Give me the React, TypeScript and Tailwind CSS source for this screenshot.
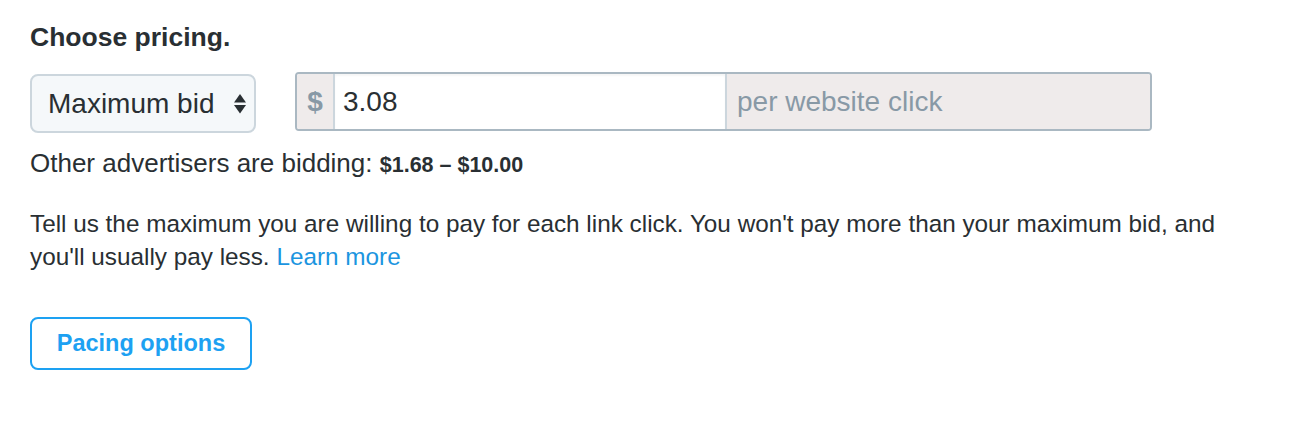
export default function App() {
  return (
    <div className="min-h-screen bg-white px-[30px] pt-[21px] font-['Liberation_Sans',Arial,sans-serif] text-[#292f33]">
      <h2 className="text-[26.5px] font-bold leading-[32px]">Choose pricing.</h2>

      <div className="mt-[19px] flex items-start gap-[39px]">
        {/* select */}
        <div className="mt-[2px] flex h-[59px] w-[226px] items-center justify-between rounded-[8px] border-2 border-[#ccd6dd] bg-[#f5f8fa] pl-[16px] pr-[8px]">
          <span className="text-[28px] leading-none">Maximum bid</span>
          <svg width="12" height="20" viewBox="0 0 12 20" className="mt-[1px]">
            <path d="M6 0 L12 8.5 L0 8.5 Z" fill="#292f33" />
            <path d="M0 11 L12 11 L6 19.5 Z" fill="#292f33" />
          </svg>
        </div>

        {/* input group */}
        <div className="flex h-[59px] w-[857px] overflow-hidden rounded-[4px] border-2 border-[#aab8c2]">
          <div className="flex w-[38px] items-center justify-center border-r-2 border-[#ccd6dd] bg-[#efebeb] text-[28px] font-bold text-[#8899a6]">
            $
          </div>
          <div className="flex w-[390px] items-center bg-white pl-[8px] text-[28px] shadow-[inset_0_2px_2px_rgba(0,0,0,0.04)]">
            3.08
          </div>
          <div className="flex flex-1 items-center border-l-2 border-[#ccd6dd] bg-[#efebeb] pl-[10px] text-[28px] text-[#8899a6]">
            per website click
          </div>
        </div>
      </div>

      <p className="mt-[14px] text-[26px] leading-[32px]">
        Other advertisers are bidding:{" "}
        <span className="text-[21.5px] font-bold">$1.68 – $10.00</span>
      </p>

      <p className="mt-[26px] w-[1240px] text-[24.3px] leading-[33px]">
        Tell us the maximum you are willing to pay for each link click. You won't pay more than your maximum bid, and
        you'll usually pay less.{" "}
        <a href="#" className="text-[#1b95e0]">
          Learn more
        </a>
      </p>

      <button className="mt-[44px] flex h-[53px] w-[222px] items-center justify-center rounded-[8px] border-2 border-[#1da1f2] bg-white text-[23.5px] font-bold text-[#1da1f2]">
        Pacing options
      </button>
    </div>
  );
}
